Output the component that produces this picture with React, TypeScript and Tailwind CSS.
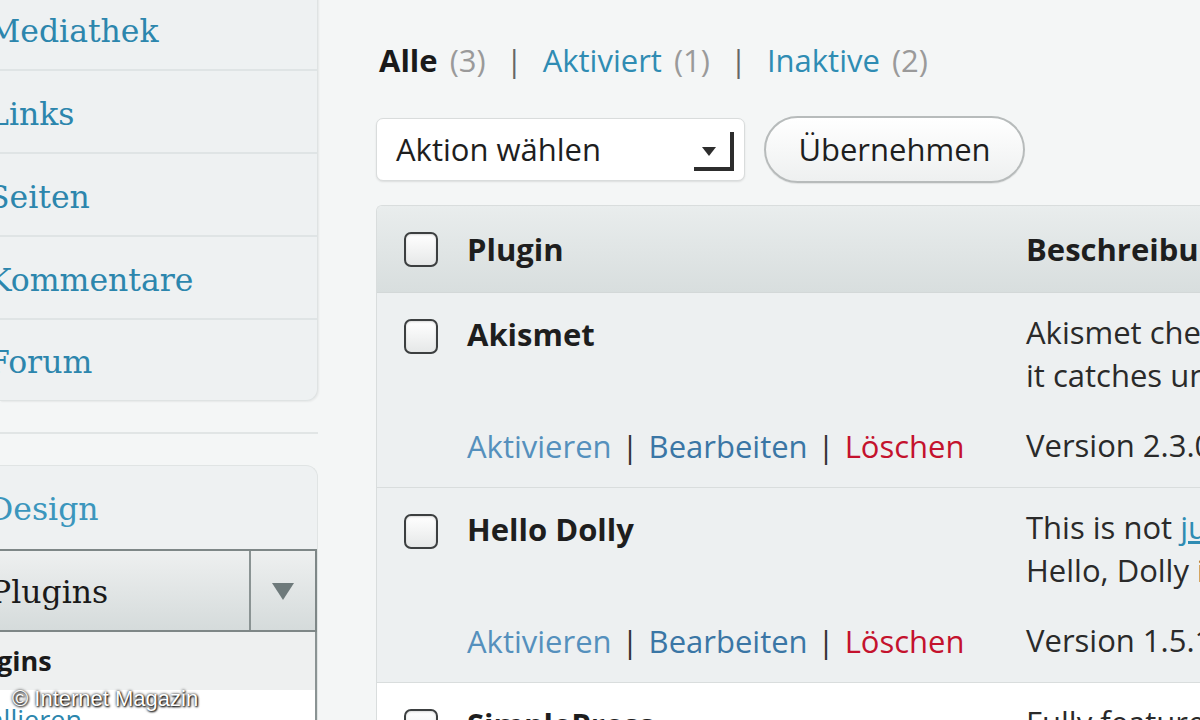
import { ReactNode } from "react";

const serif = "font-['DejaVu_Serif','Liberation_Serif',serif]";
const sans = "font-['Open_Sans','Noto_Sans',sans-serif]";

const MENU_TOP = ["Mediathek", "Links", "Seiten", "Kommentare", "Forum"];

function Checkbox() {
  return (
    <span className="block h-[35px] w-[34px] rounded-[7px] border-2 border-[#3c3f40] bg-gradient-to-b from-white to-[#e6e8e8] shadow-[inset_0_1px_2px_rgba(0,0,0,0.15)]" />
  );
}

function RowActions() {
  return (
    <div className="flex items-center gap-[10px] text-[31px] leading-[40px]">
      <span className="text-[#5590bd]">Aktivieren</span>
      <span className="text-[#333]">|</span>
      <span className="text-[#3a76a5]">Bearbeiten</span>
      <span className="text-[#333]">|</span>
      <span className="text-[#c4122d]">Löschen</span>
    </div>
  );
}

function PluginRow({
  name,
  desc,
  version,
  white,
}: {
  name: string;
  desc: ReactNode[];
  version: string;
  white?: boolean;
}) {
  return (
    <div
      className={`flex h-[195px] border-b border-[#d9dddd] ${
        white ? "bg-white" : "bg-[#edf0f1]"
      }`}
    >
      <div className="w-[90px] shrink-0 pl-[27px] pt-[26px]">
        <Checkbox />
      </div>
      <div className="flex w-[559px] shrink-0 flex-col justify-between pb-[21px] pt-[21px]">
        <div className="text-[31px] font-bold leading-[40px] text-[#1e1e1e]">{name}</div>
        <RowActions />
      </div>
      <div className="flex flex-1 flex-col justify-between whitespace-nowrap pb-[22px] pt-[18px] text-[31px] text-[#2a2a2a]">
        <div className="leading-[43px]">
          {desc.map((d, i) => (
            <div key={i}>{d}</div>
          ))}
        </div>
        <div className="leading-[40px]">{version}</div>
      </div>
    </div>
  );
}

export default function App() {
  return (
    <div className={`relative flex h-[720px] w-[1200px] overflow-hidden bg-[#f4f6f6] ${sans}`}>
      {/* Sidebar */}
      <div className="flex w-[318px] shrink-0 flex-col">
        <div className="-mt-[12px] overflow-hidden rounded-br-[12px] border-r border-b border-[#dfe3e3] bg-[#eef1f2] shadow-[1px_1px_2px_rgba(0,0,0,0.06)]">
          {MENU_TOP.map((item, i) => (
            <div
              key={item}
              className={`flex items-center pt-[6px] ${
                i < MENU_TOP.length - 1 ? "h-[83px] border-b-2 border-b-[#dfe4e5]" : "h-[80px]"
              }`}
            >
              <span className={`-ml-[12px] text-[31.5px] text-[#2c86ad] ${serif}`}>{item}</span>
            </div>
          ))}
        </div>

        <div className="mt-[31px] h-[2px] bg-[#e1e5e5]" />

        <div className="mt-[31px] flex-1 overflow-hidden rounded-tr-[12px] border-r border-t border-[#e0e4e4] bg-[#eef1f2]">
          <div className="flex h-[83px] items-center pt-[5px]">
            <span className={`-ml-[12px] text-[31.5px] text-[#3b96bd] ${serif}`}>Design</span>
          </div>
          <div className="flex h-[83px] border-y-2 border-r-2 border-[#7e8787] bg-gradient-to-b from-[#eef0f0] to-[#d5dbdb]">
            <div className="flex flex-1 items-center pt-[4px]">
              <span className={`-ml-[10px] text-[31.5px] text-[#1a1a1a] ${serif}`}>Plugins</span>
            </div>
            <div className="flex w-[66px] items-center justify-center border-l-2 border-[#8a9393]">
              <svg width="24" height="20" viewBox="0 0 24 20">
                <polygon points="1,2 23,2 12,19" fill="#6e7a7b" />
              </svg>
            </div>
          </div>
          <div className="h-full border-r-2 border-[#8a9393]">
            <div className="flex h-[58px] items-center bg-[#eef0f0]">
              <span className="-ml-[46px] text-[27px] font-bold text-[#1a1a1a]">Plugins</span>
            </div>
            <div className="flex h-[40px] items-start bg-white pt-[10px]">
              <span className="-ml-[58px] text-[27px] text-[#2c86ad]">Installieren</span>
            </div>
          </div>
        </div>
      </div>

      {/* Main */}
      <div className="ml-[58px] flex flex-1 flex-col">
        <div className="mt-[38px] flex items-center gap-[12px] text-[31px] leading-[44px]">
          <span className="ml-[3px] font-bold text-[#1a1a1a]">Alle</span>
          <span className="text-[#9a9a9a]">(3)</span>
          <span className="mx-[8px] text-[#666]">|</span>
          <span className="text-[#2f8cb3]">Aktiviert</span>
          <span className="text-[#9a9a9a]">(1)</span>
          <span className="mx-[8px] text-[#666]">|</span>
          <span className="text-[#2f8cb3]">Inaktive</span>
          <span className="text-[#9a9a9a]">(2)</span>
        </div>

        <div className="mt-[34px] flex items-center gap-[19px]">
          <div className="relative flex h-[63px] w-[369px] items-center rounded-[7px] border border-[#d9dcdc] bg-white pl-[19px] shadow-[0_1px_2px_rgba(0,0,0,0.1)]">
            <span className="text-[31px] text-[#1e1e1e]">Aktion wählen</span>
            <svg className="absolute right-[6px] top-[10px]" width="44" height="44" viewBox="0 0 44 44">
              <polygon points="8,18 22,18 15,27" fill="#2d2d2d" />
              <path d="M38 3 V40 H0" fill="none" stroke="#2d2d2d" strokeWidth="4" />
            </svg>
          </div>
          <div className="flex h-[67px] w-[261px] items-center justify-center rounded-full border-2 border-[#b7bbbb] bg-gradient-to-b from-white to-[#eef0f0] text-[31px] text-[#1e1e1e] shadow-[0_1px_1px_rgba(0,0,0,0.08)]">
            Übernehmen
          </div>
        </div>

        <div className="mt-[22px] overflow-hidden rounded-tl-[6px] border-l border-t border-[#d9dddd]">
          <div className="flex h-[87px] items-center border-b border-[#d3d8d8] bg-gradient-to-b from-[#e9eded] to-[#d8dede]">
            <div className="w-[90px] shrink-0 pl-[27px]">
              <Checkbox />
            </div>
            <div className="w-[559px] shrink-0 text-[31px] font-bold text-[#1e1e1e]">Plugin</div>
            <div className="whitespace-nowrap text-[31px] font-bold text-[#1e1e1e]">Beschreibung</div>
          </div>
          <PluginRow
            name="Akismet"
            desc={["Akismet checks your comments against", "it catches under your nose"]}
            version="Version 2.3.0"
          />
          <PluginRow
            name="Hello Dolly"
            desc={[
              <span key="a">
                This is not <span className="text-[#2f8cb3] underline">just a plugin</span>
              </span>,
              "Hello, Dolly in the upper right",
            ]}
            version="Version 1.5.1"
          />
          <PluginRow
            name="SimplePress"
            desc={["Fully featured forum"]}
            version="Version 4.0"
            white
          />
        </div>
      </div>

      {/* watermark */}
      <div className="absolute left-[12px] top-[682px] font-['Liberation_Sans',Arial,sans-serif] text-[22px] text-white [text-shadow:0_0_3px_#000,1px_1px_2px_#000]">
        © Internet Magazin
      </div>
    </div>
  );
}
